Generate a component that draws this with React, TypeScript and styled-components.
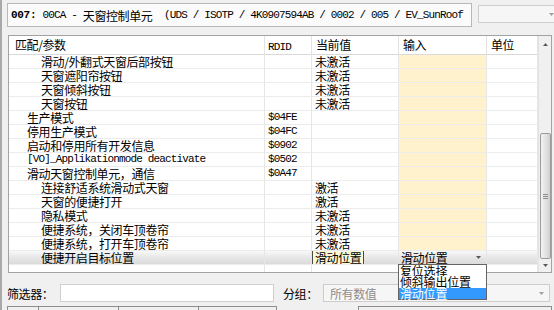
import React from 'react';
import styled, { createGlobalStyle, css } from 'styled-components';

const COLS = '256px 47px 87px 88px 51px';

const GlobalStyle = createGlobalStyle`
  *, *::before, *::after { box-sizing: border-box; }
  html, body { margin: 0; padding: 0; background: #f0f0f0; }
  body {
    font-family: "Noto Sans CJK SC", "Liberation Sans", sans-serif;
    font-size: 12px;
    letter-spacing: -0.4px;
    color: #000;
  }
`;

const Window = styled.div`
  width: 554px;
  height: 310px;
  border-left: 2px solid #a9a9a9;
  overflow: hidden;
  display: flex;
  flex-direction: column;
`;

const Mono = styled.span<{ $bold?: boolean }>`
  font-family: "Liberation Mono", monospace;
  font-size: 11px;
  letter-spacing: ${p => (p.$bold ? '-0.3px' : '-0.85px')};
  font-weight: ${p => (p.$bold ? 700 : 400)};
  white-space: pre;
`;

const TitleRow = styled.div`
  display: flex;
  align-items: flex-start;
  gap: 6px;
  padding: 3px 0 0 5px;
  flex-shrink: 0;
`;

const TitleBox = styled.div`
  width: 465px;
  height: 24px;
  flex-shrink: 0;
  border: 1px solid #b8b8b8;
  background: #fbfbfb;
  display: flex;
  align-items: center;
  padding-left: 3px;
  white-space: nowrap;
  overflow: hidden;
`;

const Combo = styled.div<{ $w: number }>`
  width: ${p => p.$w}px;
  height: 18px;
  flex-shrink: 0;
  border: 1px solid #cdcdcd;
  background: #f6f6f6;
  color: #8d8d8d;
  display: flex;
  align-items: center;
  justify-content: space-between;
  padding: 0 5px 0 6px;
  white-space: nowrap;
`;

const TopCombo = styled(Combo)`
  margin-top: 2px;
  padding-right: 7px;
`;

const Panel = styled.div`
  margin: 8px 0 0 6px;
  width: 544px;
  height: 238px;
  flex-shrink: 0;
  border: 1px solid #a3a3a3;
  background: #fff;
  display: flex;
`;

const Grid = styled.div`
  width: 529px;
  display: flex;
  flex-direction: column;
`;

const HeaderRow = styled.div`
  display: grid;
  grid-template-columns: ${COLS};
  height: 19px;
  border-bottom: 1px solid #d9d9d9;
`;

const HeaderCell = styled.div<{ $pad: number }>`
  padding-left: ${p => p.$pad}px;
  border-right: 1px solid #e3e3e3;
  line-height: 18px;
  white-space: nowrap;
`;

const Row = styled.div<{ $selected?: boolean }>`
  display: grid;
  grid-template-columns: ${COLS};
  height: 14px;
  ${p =>
    p.$selected &&
    css`
      background: linear-gradient(#f8f8f8, #e6e6e6 50%, #d9d9d9);
    `}
`;

const Cell = styled.div<{ $pad?: number; $input?: boolean; $sel?: boolean }>`
  position: relative;
  display: flex;
  align-items: center;
  padding-left: ${p => p.$pad ?? 3}px;
  border-right: 1px solid #e6e6e6;
  border-bottom: 1px solid #ececec;
  line-height: 13px;
  white-space: nowrap;
  background: ${p => (p.$input && !p.$sel ? '#fff2cc' : 'transparent')};
`;

const SelectCell = styled(Cell)`
  justify-content: space-between;
  padding-right: 5px;
`;

const Editing = styled.span`
  height: 100%;
  display: flex;
  align-items: center;
  padding: 0 2px;
  margin-left: -3px;
  border-left: 1px solid #4a4a4a;
  border-right: 1px solid #4a4a4a;
  background: #fbf8d6;
`;

const Filler = styled.div`
  flex: 1;
  display: grid;
  grid-template-columns: ${COLS};
`;

const FillCell = styled.div`
  border-right: 1px solid #e6e6e6;
`;

const Dropdown = styled.div`
  position: absolute;
  top: 13px;
  left: -1px;
  width: 89px;
  height: 36px;
  z-index: 10;
  border: 1px solid #646464;
  background: #fff;
  display: flex;
  flex-direction: column;
`;

const Option = styled.div<{ $active?: boolean }>`
  flex: 1;
  display: flex;
  align-items: center;
  padding-left: 1px;
  letter-spacing: -0.2px;
  line-height: 11px;
  background: ${p => (p.$active ? '#3399ff' : '#fff')};
  color: ${p => (p.$active ? '#fff' : '#000')};
`;

const Scrollbar = styled.div`
  width: 13px;
  border-left: 1px solid #e2e2e2;
  background: #f0f0f0;
  display: flex;
  flex-direction: column;
  align-items: center;
`;

const ScrollBtn = styled.div<{ $h: number; $end?: boolean }>`
  height: ${p => p.$h}px;
  width: 100%;
  margin-top: ${p => (p.$end ? 'auto' : '0')};
  display: flex;
  align-items: center;
  justify-content: center;
  flex-shrink: 0;
`;

const Thumb = styled.div`
  margin-top: 80px;
  width: 11px;
  height: 126px;
  border: 1px solid #9c9c9c;
  border-radius: 2px;
  background: linear-gradient(to right, #f3f3f3, #e0e0e0 60%, #cfcfcf);
  display: flex;
  align-items: center;
  justify-content: center;
`;

const FilterRow = styled.div`
  display: flex;
  align-items: center;
  margin-top: 11px;
  padding-left: 5px;
  height: 18px;
  flex-shrink: 0;
`;

const Label = styled.span<{ $w: number; $ml?: number }>`
  width: ${p => p.$w}px;
  margin-left: ${p => p.$ml ?? 0}px;
  flex-shrink: 0;
  white-space: nowrap;
`;

const TextInput = styled.div`
  width: 214px;
  height: 18px;
  border: 1px solid #cfcfcf;
  background: #fff;
  flex-shrink: 0;
`;

const BottomRow = styled.div`
  display: flex;
  gap: 81px;
  margin-top: 4px;
  padding-left: 5px;
  flex-shrink: 0;
`;

const Strip = styled.div<{ $w: number }>`
  width: ${p => p.$w}px;
  height: 14px;
  border: 1px solid #8d8d8d;
  display: flex;
`;

const Seg = styled.div<{ $w: number }>`
  width: ${p => p.$w}px;
  border-right: 1px solid #8d8d8d;
`;

const Tri = ({ up, color = '#5a5a5a' }: { up?: boolean; color?: string }) => (
  <svg width="5" height="3" viewBox="0 0 5 3">
    <path d={up ? 'M0 3L2.5 0L5 3Z' : 'M0 0L5 0L2.5 3Z'} fill={color} />
  </svg>
);

const Grip = () => (
  <svg width="5" height="5" viewBox="0 0 5 5">
    <path d="M0 0.5H5M0 2.5H5M0 4.5H5" stroke="#8a8a8a" strokeWidth="1" />
  </svg>
);

type Param = { name: string; level: 1 | 2; mono?: boolean; rdid?: string; value?: string };

const params: Param[] = [
  { name: '滑动/外翻式天窗后部按钮', level: 2, value: '未激活' },
  { name: '天窗遮阳帘按钮', level: 2, value: '未激活' },
  { name: '天窗倾斜按钮', level: 2, value: '未激活' },
  { name: '天窗按钮', level: 2, value: '未激活' },
  { name: '生产模式', level: 1, rdid: '$04FE' },
  { name: '停用生产模式', level: 1, rdid: '$04FC' },
  { name: '启动和停用所有开发信息', level: 1, rdid: '$0902' },
  { name: '[VO]_Applikationmode deactivate', level: 1, mono: true, rdid: '$0502' },
  { name: '滑动天窗控制单元，通信', level: 1, rdid: '$0A47' },
  { name: '连接舒适系统滑动式天窗', level: 2, value: '激活' },
  { name: '天窗的便捷打开', level: 2, value: '激活' },
  { name: '隐私模式', level: 2, value: '未激活' },
  { name: '便捷系统，关闭车顶卷帘', level: 2, value: '未激活' },
  { name: '便捷系统，打开车顶卷帘', level: 2, value: '未激活' },
];

const indent = (level: 1 | 2) => (level === 1 ? 18 : 32);

const App: React.FC = () => {
  return (
    <Window>
      <GlobalStyle />
      <TitleRow>
        <TitleBox>
          <Mono $bold>007: </Mono>
          <Mono>00CA - </Mono>
          天窗控制单元
          <Mono>  (UDS / ISOTP / 4K0907594AB / 0002 / 005 / EV_SunRoof</Mono>
        </TitleBox>
        <TopCombo $w={84}>
          <span />
          <Tri color="#a0a0a0" />
        </TopCombo>
      </TitleRow>

      <Panel>
        <Grid>
          <HeaderRow>
            <HeaderCell $pad={6}>匹配/参数</HeaderCell>
            <HeaderCell $pad={3}>
              <Mono>RDID</Mono>
            </HeaderCell>
            <HeaderCell $pad={4}>当前值</HeaderCell>
            <HeaderCell $pad={4}>输入</HeaderCell>
            <HeaderCell $pad={4}>单位</HeaderCell>
          </HeaderRow>

          {params.map(p => (
            <Row key={p.name}>
              <Cell $pad={indent(p.level)}>{p.mono ? <Mono>{p.name}</Mono> : p.name}</Cell>
              <Cell>{p.rdid && <Mono>{p.rdid}</Mono>}</Cell>
              <Cell>{p.value}</Cell>
              <Cell $input />
              <Cell />
            </Row>
          ))}

          <Row $selected>
            <Cell $pad={32}>便捷开启目标位置</Cell>
            <Cell />
            <Cell>
              <Editing>滑动位置</Editing>
            </Cell>
            <SelectCell $input $sel $pad={2}>
              滑动位置
              <Tri />
              <Dropdown>
                <Option>复位选择</Option>
                <Option>倾斜输出位置</Option>
                <Option $active>滑动位置</Option>
              </Dropdown>
            </SelectCell>
            <Cell />
          </Row>

          <Filler>
            <FillCell />
            <FillCell />
            <FillCell />
            <FillCell />
            <FillCell />
          </Filler>
        </Grid>

        <Scrollbar>
          <ScrollBtn $h={17}>
            <Tri up />
          </ScrollBtn>
          <Thumb>
            <Grip />
          </Thumb>
          <ScrollBtn $h={13} $end>
            <Tri />
          </ScrollBtn>
        </Scrollbar>
      </Panel>

      <FilterRow>
        <Label $w={53}>筛选器：</Label>
        <TextInput />
        <Label $w={40} $ml={9}>
          分组：
        </Label>
        <Combo $w={227}>
          所有数值
          <Tri color="#a0a0a0" />
        </Combo>
      </FilterRow>

      <BottomRow>
        <Strip $w={270}>
          <Seg $w={31} />
          <Seg $w={80} />
          <Seg $w={80} />
        </Strip>
        <Strip $w={194} />
      </BottomRow>
    </Window>
  );
};

export default App;
